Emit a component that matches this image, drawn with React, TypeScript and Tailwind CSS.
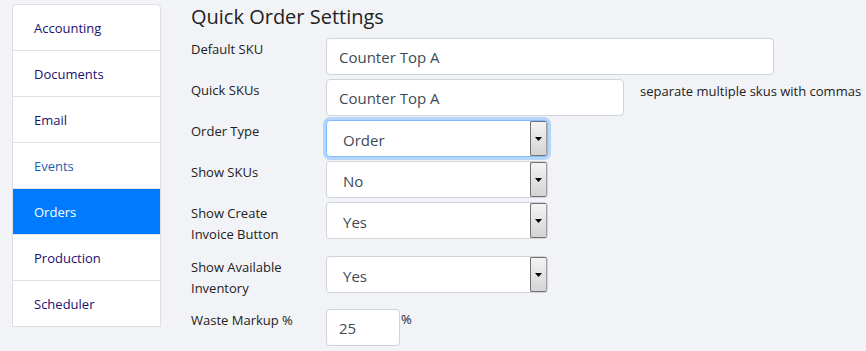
import React from "react";

const navItems = [
  { label: "Accounting", color: "text-[#1c1170]" },
  { label: "Documents", color: "text-[#1c1170]" },
  { label: "Email", color: "text-[#1c1170]" },
  { label: "Events", color: "text-[#1f5bb6]" },
  { label: "Orders", active: true },
  { label: "Production", color: "text-[#1c1170]" },
  { label: "Scheduler", color: "text-[#1c1170]" },
];

function TextBox({ value, width }: { value: string; width: string }) {
  return (
    <div
      className={`${width} h-[37px] shrink-0 rounded-[4px] border border-[#ced4da] bg-white pl-[12px] pt-[2px] flex items-center text-[15px] text-[#3e4a57]`}
    >
      {value}
    </div>
  );
}

function Select({ value, focused }: { value: string; focused?: boolean }) {
  return (
    <div
      className={`w-[222px] h-[37px] shrink-0 rounded-[4px] border bg-white flex items-stretch ${
        focused
          ? "border-[#80bdff] shadow-[0_0_0_3px_rgba(0,123,255,0.25)]"
          : "border-[#ced4da]"
      }`}
    >
      <div className="flex-1 pl-[16px] pt-[4px] flex items-center text-[15px] text-[#3e4a57]">
        {value}
      </div>
      {/* native-looking drop button */}
      <div className="w-[17px] border border-[#707070] border-r-[#a0a0a0] rounded-[2px] bg-gradient-to-b from-[#f4f4f4] to-[#d4d4d4] flex items-center justify-center">
        <svg width="7" height="4" viewBox="0 0 7 4">
          <path d="M0 0h7L3.5 4z" fill="#000" />
        </svg>
      </div>
    </div>
  );
}

function Row({
  label,
  children,
  className = "",
}: {
  label: React.ReactNode;
  children: React.ReactNode;
  className?: string;
}) {
  return (
    <div className={`flex items-start ${className}`}>
      <div className="w-[135px] shrink-0 pt-[1px] leading-[21px] text-[13px] text-[#222]">
        {label}
      </div>
      {children}
    </div>
  );
}

export default function App() {
  return (
    <div
      className="w-[866px] h-[351px] overflow-hidden bg-[#f2f3f7] flex items-start pl-[12px] pt-[4px]"
      style={{ fontFamily: '"Segoe UI", "Open Sans", "Noto Sans", sans-serif' }}
    >
      {/* Sidebar */}
      <div className="w-[149px] shrink-0 rounded-t-[4px] border border-[#dedede] bg-white overflow-hidden">
        {navItems.map((item, i) => (
          <div
            key={item.label}
            className={`pl-[21px] pt-[3px] flex items-center text-[13px] ${
              i > 0 ? "h-[46px] border-t border-[#e2e2e2]" : "h-[45px]"
            } ${item.active ? "bg-[#007bff] text-white border-[#007bff]" : item.color}`}
          >
            {item.label}
          </div>
        ))}
      </div>

      {/* Main */}
      <div className="ml-[30px] flex flex-col">
        <h1 className="h-[34px] text-[20px] leading-[26px] text-[#222] font-normal">
          Quick Order Settings
        </h1>
        <div className="flex flex-col gap-[4px]">
          <Row label="Default SKU">
            <TextBox value="Counter Top A" width="w-[448px]" />
          </Row>
          <Row label="Quick SKUs">
            <TextBox value="Counter Top A" width="w-[298px]" />
            <div className="ml-[16px] pt-[2px] leading-[21px] text-[13px] text-[#222] whitespace-nowrap">
              separate multiple skus with commas
            </div>
          </Row>
          <Row label="Order Type">
            <Select value="Order" focused />
          </Row>
          <Row label="Show SKUs">
            <Select value="No" />
          </Row>
          <Row label={<>Show Create<br />Invoice Button</>} className="mb-[7px]">
            <Select value="Yes" />
          </Row>
          <Row label={<>Show Available<br />Inventory</>} className="mb-[6px]">
            <Select value="Yes" />
          </Row>
          <Row label="Waste Markup %">
            <TextBox value="25" width="w-[74px]" />
            <div className="ml-[1px] leading-[21px] text-[13px] text-[#222]">%</div>
          </Row>
        </div>
      </div>
    </div>
  );
}
